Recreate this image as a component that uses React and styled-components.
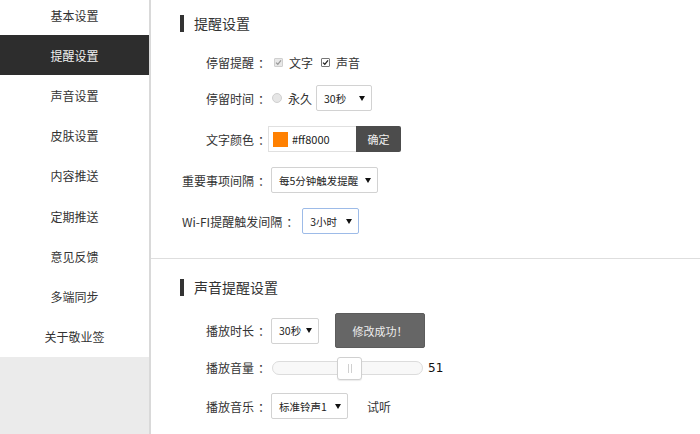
import React from 'react'
import styled, { createGlobalStyle } from 'styled-components'

const GlobalStyle = createGlobalStyle`
  html, body {
    margin: 0;
    padding: 0;
    background: #fff;
  }
  body {
    font-family: "Noto Sans CJK SC", "Noto Sans", sans-serif;
  }
`

const navItems = ['基本设置', '提醒设置', '声音设置', '皮肤设置', '内容推送', '定期推送', '意见反馈', '多端同步', '关于敬业签']

const Check = ({ disabled }) => (
    <CheckBox $disabled={disabled}>
        <svg width="7" height="7" viewBox="0 0 7 7">
            <path d="M1 3.6 L2.8 5.3 L6 1.4" fill="none" stroke={disabled ? '#9a9a9a' : '#222'} strokeWidth="1.3" />
        </svg>
    </CheckBox>
)

const Select = ({ value, width, focus, ml }) => (
    <SelectBox $w={width} $focus={focus} $ml={ml}>
        <span>{value}</span>
        <Arrow />
    </SelectBox>
)

const Slider = ({ value, width }) => {
    // thumb is 25px wide, track width minus that is the travel
    const left = Math.round(((width - 25) * value) / 100)
    return (
        <Track $w={width}>
            <Thumb style={{ left: left + 'px' }}>
                <Grip />
                <Grip />
            </Thumb>
        </Track>
    )
}

const Field = ({ children }) => (
    <Label>
        {children}
        <Colon>：</Colon>
    </Label>
)

const App = () => {
    return (
        <Page>
            <GlobalStyle />
            <Sidebar>
                <NavList>
                    {navItems.map((item) => (
                        <NavItem key={item} $active={item === '提醒设置'}>{item}</NavItem>
                    ))}
                </NavList>
                <SideFill />
            </Sidebar>
            <Main>
                <Section $h={259} $pt={14}>
                    <Title>提醒设置</Title>
                    <Row $h={16} $mt={22}>
                        <Field>停留提醒</Field>
                        <Gap $w={4} />
                        <Check disabled />
                        <OptText>文字</OptText>
                        <Check />
                        <OptText>声音</OptText>
                    </Row>
                    <Row $h={26} $mt={15}>
                        <Field>停留时间</Field>
                        <Gap $w={2} />
                        <Radio />
                        <OptText>永久</OptText>
                        <Select value="30秒" width={56} ml={-4} />
                    </Row>
                    <Row $h={26} $mt={15}>
                        <Field>文字颜色</Field>
                        <ColorInput>
                            <Swatch />
                            <HexText>#ff8000</HexText>
                        </ColorInput>
                        <ConfirmButton>确定</ConfirmButton>
                    </Row>
                    <Row $h={26} $mt={15}>
                        <Field>重要事项间隔</Field>
                        <Select value="每5分钟触发提醒" width={107} ml={1} />
                    </Row>
                    <Row $h={26} $mt={15}>
                        <Field>Wi-FI提醒触发间隔</Field>
                        <Select value="3小时" width={57} focus ml={4} />
                    </Row>
                </Section>
                <Section $pt={19}>
                    <Title>声音提醒设置</Title>
                    <Row $h={35} $mt={17}>
                        <Field>播放时长</Field>
                        <Select value="30秒" width={48} ml={1} />
                        <Toast>修改成功！</Toast>
                    </Row>
                    <Row $h={23} $mt={8}>
                        <Field>播放音量</Field>
                        <Gap $w={2} />
                        <Slider value={51} width={151} />
                        <Volume>51</Volume>
                    </Row>
                    <Row $h={26} $mt={14}>
                        <Field>播放音乐</Field>
                        <Select value="标准铃声1" width={77} ml={1} />
                        <Listen>试听</Listen>
                    </Row>
                </Section>
            </Main>
        </Page>
    )
}

const Page = styled.div`
    display: flex;
    width: 700px;
    height: 434px;
    overflow: hidden;
    background: #fff;
    color: #333;
`
const Sidebar = styled.aside`
    width: 149px;
    flex-shrink: 0;
    display: flex;
    flex-direction: column;
    border-right: 2px solid #d9d9d9;
    background: #fff;
`
const NavList = styled.ul`
    list-style: none;
    margin: -5px 0 0;
    padding: 0;
`
const NavItem = styled.li`
    height: 40.2px;
    display: flex;
    align-items: center;
    justify-content: center;
    font-size: 12px;
    color: ${(p) => (p.$active ? '#f0f0f0' : '#333')};
    background: ${(p) => (p.$active ? '#2d2d2d' : 'transparent')};
`
const SideFill = styled.div`
    flex: 1;
    background: #ebebeb;
`
const Main = styled.main`
    flex: 1;
    display: flex;
    flex-direction: column;
    background: #fff;
`
const Section = styled.section`
    box-sizing: border-box;
    padding: ${(p) => p.$pt}px 0 0 31px;
    height: ${(p) => (p.$h ? p.$h + 'px' : 'auto')};
    border-bottom: ${(p) => (p.$h ? '1px solid #dedede' : 'none')};
    flex: ${(p) => (p.$h ? 'none' : 1)};
`
const Title = styled.h2`
    display: flex;
    align-items: center;
    gap: 10px;
    height: 18px;
    margin: 0 0 0 -2px;
    font-size: 14px;
    font-weight: normal;
    color: #333;
    &::before {
        content: '';
        width: 4px;
        height: 17px;
        background: #333;
    }
`
const Row = styled.div`
    display: flex;
    align-items: center;
    height: ${(p) => p.$h}px;
    margin-top: ${(p) => p.$mt}px;
`
const Label = styled.span`
    min-width: 88px;
    flex-shrink: 0;
    display: flex;
    justify-content: flex-end;
    white-space: nowrap;
    font-size: 12px;
    color: #333;
`
const Colon = styled.span`
    width: 12px;
    padding-left: 4px;
`
const Gap = styled.span`
    width: ${(p) => p.$w}px;
    flex-shrink: 0;
`
const CheckBox = styled.span`
    box-sizing: border-box;
    width: 9px;
    height: 9px;
    display: inline-flex;
    align-items: center;
    justify-content: center;
    border: 1px solid ${(p) => (p.$disabled ? '#cfcfcf' : '#777')};
    background: ${(p) => (p.$disabled ? '#e8e8e8' : '#fff')};
    border-radius: 1px;
`
const Radio = styled.span`
    box-sizing: border-box;
    width: 10px;
    height: 10px;
    border-radius: 50%;
    border: 1px solid #d0d0d0;
    background: #e6e6e6;
`
const OptText = styled.span`
    font-size: 12px;
    color: #333;
    margin: 0 8px 0 6px;
`
const SelectBox = styled.div`
    box-sizing: border-box;
    width: ${(p) => p.$w}px;
    height: 26px;
    margin-left: ${(p) => p.$ml}px;
    display: flex;
    align-items: center;
    justify-content: space-between;
    padding: 0 6px 0 7px;
    border: 1px solid ${(p) => (p.$focus ? '#9dbbe8' : '#d2d2d2')};
    border-radius: 2px;
    background: #fff;
    font-size: 10.5px;
    color: #222;
    white-space: nowrap;
`
const Arrow = styled.span`
    width: 0;
    height: 0;
    border-left: 3px solid transparent;
    border-right: 3px solid transparent;
    border-top: 5px solid #111;
`
const ColorInput = styled.div`
    box-sizing: border-box;
    width: 88px;
    height: 26px;
    margin-left: -2px;
    display: flex;
    align-items: center;
    border: 1px solid #e0e0e0;
    border-right: none;
    background: #fff;
`
const Swatch = styled.span`
    width: 15px;
    height: 15px;
    margin-left: 4px;
    background: #ff8000;
`
const HexText = styled.span`
    margin-left: 4px;
    font-size: 11px;
    color: #222;
`
const ConfirmButton = styled.button`
    box-sizing: border-box;
    width: 45px;
    height: 26px;
    border: none;
    border-radius: 0 2px 2px 0;
    background: #4c4c4c;
    color: #f0f0f0;
    font-family: inherit;
    font-size: 11px;
    padding: 0;
`
const Toast = styled.div`
    box-sizing: border-box;
    width: 90px;
    height: 35px;
    margin-left: 16px;
    display: flex;
    align-items: center;
    justify-content: center;
    background: #666;
    border: 1px solid #5c5c5c;
    border-radius: 2px;
    color: #eee;
    font-size: 11px;
`
const Track = styled.div`
    box-sizing: border-box;
    position: relative;
    width: ${(p) => p.$w}px;
    height: 14px;
    border: 1px solid #dcdcdc;
    border-radius: 7px;
    background: #f8f8f8;
`
const Thumb = styled.div`
    box-sizing: border-box;
    position: absolute;
    top: -5px;
    width: 25px;
    height: 23px;
    display: flex;
    align-items: center;
    justify-content: center;
    gap: 2px;
    background: #fff;
    border: 1px solid #d0d0d0;
    border-radius: 3px;
    box-shadow: 0 1px 1px rgba(0, 0, 0, 0.08);
`
const Grip = styled.span`
    width: 1px;
    height: 9px;
    background: #d0d0d0;
`
const Volume = styled.span`
    margin-left: 5px;
    font-family: "DejaVu Sans", sans-serif;
    font-size: 12px;
    color: #111;
`
const Listen = styled.span`
    margin-left: 19px;
    font-size: 12px;
    color: #333;
`

export default App
